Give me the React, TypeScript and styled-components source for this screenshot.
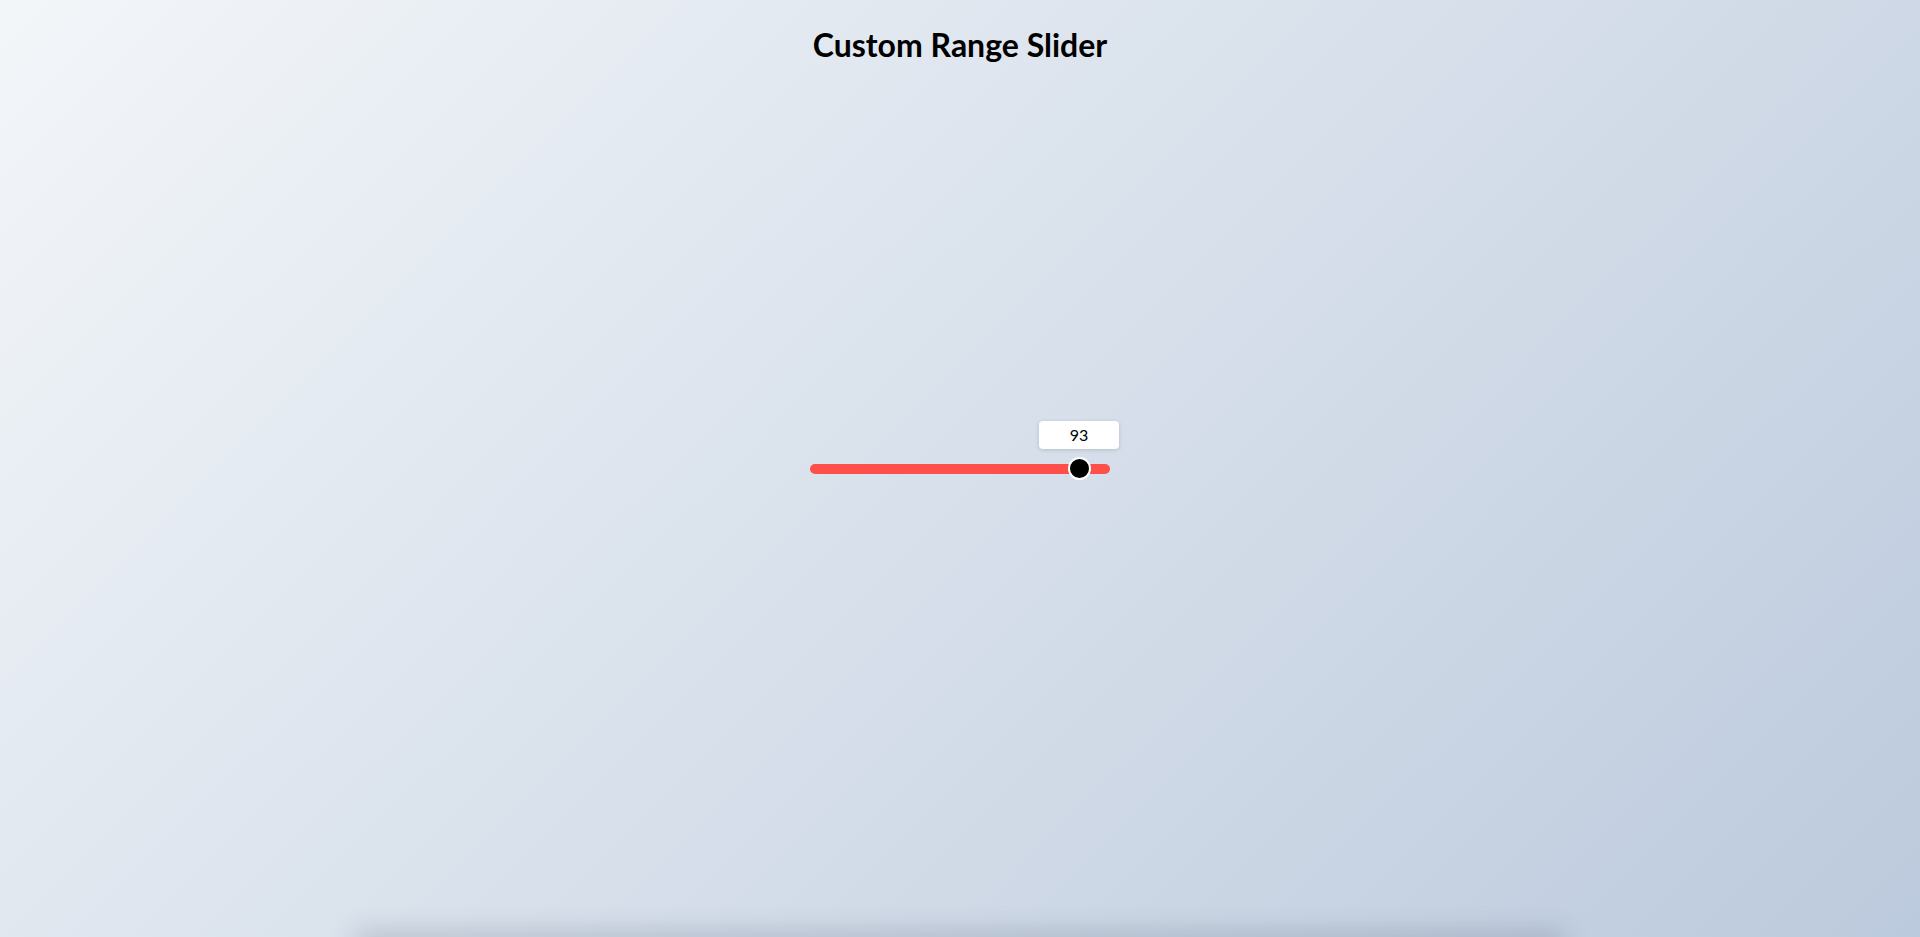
import React, { useState } from "react";
import styled, { createGlobalStyle } from "styled-components";

const GlobalStyle = createGlobalStyle`
  html, body {
    margin: 0;
    padding: 0;
    overflow: hidden;
  }
  body {
    font-family: Lato, "Open Sans", Arial, sans-serif;
  }
`;

const Page = styled.main`
  position: relative;
  height: 100vh;
  display: grid;
  grid-template-rows: 1fr auto 1fr;
  justify-items: center;
  background: linear-gradient(135deg, #f3f6f9 0%, #bccadd 100%);
  overflow: hidden;
`;

const Title = styled.h1`
  align-self: start;
  margin: 25px 0 0;
  font-family: Lato, sans-serif;
  font-weight: 700;
  font-size: 32px;
  color: #000;
`;

const SliderWrap = styled.div`
  position: relative;
  width: 300px;
  height: 22px;
  display: flex;
  align-items: center;
`;

const Range = styled.input`
  -webkit-appearance: none;
  appearance: none;
  width: 300px;
  height: 10px;
  margin: 0;
  border-radius: 5px;
  background: #ff4f4a;
  outline: none;
  cursor: pointer;

  &::-webkit-slider-thumb {
    -webkit-appearance: none;
    appearance: none;
    box-sizing: border-box;
    width: 23px;
    height: 23px;
    border-radius: 50%;
    background: #000;
    border: 2px solid #fff;
  }
  &::-moz-range-thumb {
    box-sizing: border-box;
    width: 23px;
    height: 23px;
    border-radius: 50%;
    background: #000;
    border: 2px solid #fff;
  }
`;

const ValueLabel = styled.div`
  position: absolute;
  bottom: calc(100% + 9px);
  width: 80px;
  height: 28px;
  transform: translateX(-50%);
  display: flex;
  align-items: center;
  justify-content: center;
  background: #fff;
  border-radius: 4px;
  box-shadow: 0 1px 4px rgba(0, 0, 0, 0.15);
  font-family: Lato, sans-serif;
  font-size: 16px;
  color: #000;
`;

const BottomShade = styled.div`
  align-self: end;
  width: 1200px;
  height: 10px;
  margin-bottom: -10px;
  box-shadow: 0 0 26px 4px rgba(70, 80, 100, 0.28);
`;

const THUMB = 23;
const WIDTH = 300;

export default function App() {
  const [value, setValue] = useState(93);
  const left = THUMB / 2 + (value / 100) * (WIDTH - THUMB);
  return (
    <>
      <GlobalStyle />
      <Page>
        <Title>Custom Range Slider</Title>
        <SliderWrap>
          <ValueLabel style={{ left: `${left}px` }}>{value}</ValueLabel>
          <Range
            type="range"
            min={0}
            max={100}
            value={value}
            onChange={(e) => setValue(Number(e.target.value))}
          />
        </SliderWrap>
        <BottomShade />
      </Page>
    </>
  );
}
